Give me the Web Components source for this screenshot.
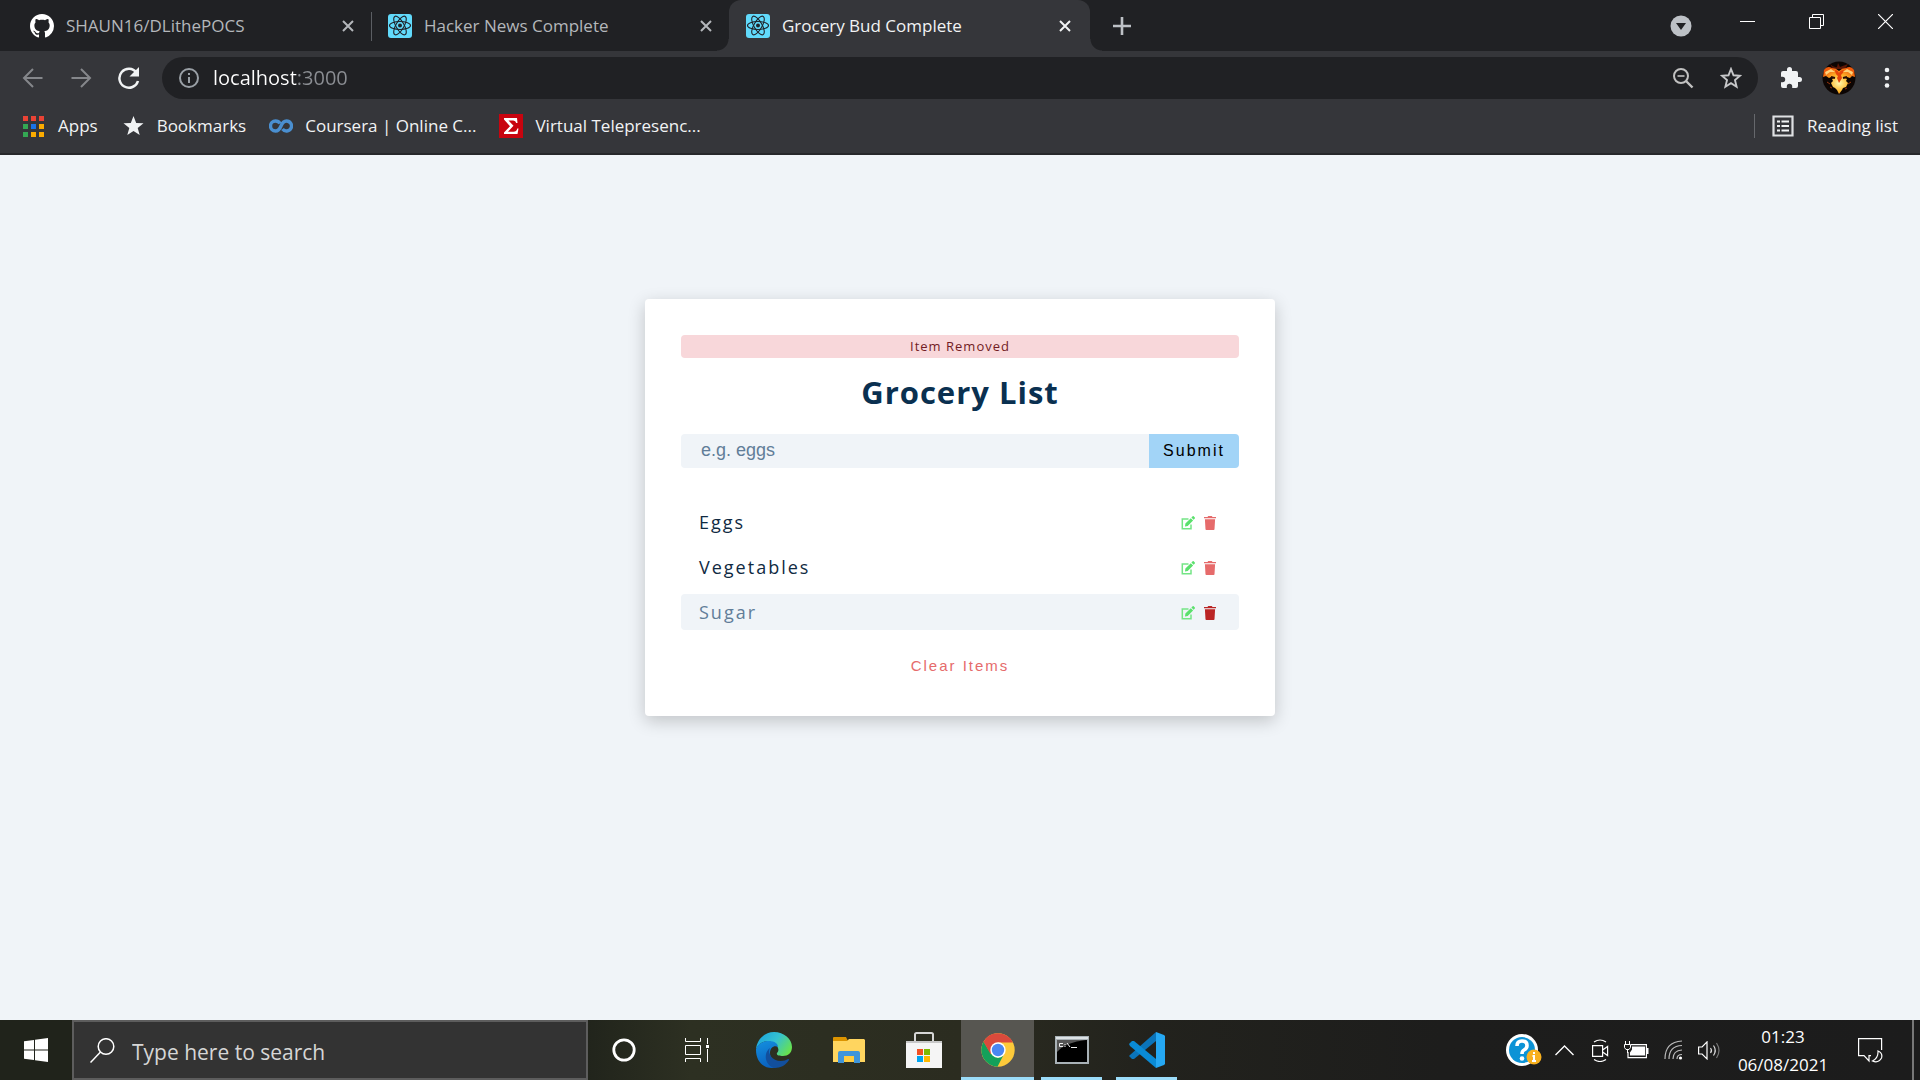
<!DOCTYPE html>
<html lang="en">
<head>
<meta charset="utf-8">
<title>Grocery Bud Complete</title>
<style>
  html { height: 100%; }
  body {
    margin: 0; min-height: 100%; display: flex; flex-direction: column;
    background: #f0f4f8; font-family: "Open Sans", "Noto Sans", sans-serif; font-size: 17px;
  }
  main { flex: 1; padding: 144px 0 0; }
</style>
</head>
<body>
<tab-strip>
  <browser-tab icon="github">SHAUN16/DLithePOCS</browser-tab>
  <browser-tab icon="react" divided>Hacker News Complete</browser-tab>
  <browser-tab icon="react" active>Grocery Bud Complete</browser-tab>
</tab-strip>
<address-bar></address-bar>
<bookmark-bar>
  <bookmark-link icon="apps">Apps</bookmark-link>
  <bookmark-link icon="star">Bookmarks</bookmark-link>
  <bookmark-link icon="coursera">Coursera | Online C...</bookmark-link>
  <bookmark-link icon="sigma">Virtual Telepresenc...</bookmark-link>
  <bookmark-link icon="reading" slot="end">Reading list</bookmark-link>
</bookmark-bar>
<main>
  <grocery-card>
    <span slot="alert">Item Removed</span>
    <span slot="title">Grocery List</span>
    <grocery-item>Eggs</grocery-item>
    <grocery-item>Vegetables</grocery-item>
    <grocery-item current>Sugar</grocery-item>
  </grocery-card>
</main>
<task-bar>
  <task-button icon="cortana" label="Cortana"></task-button>
  <task-button icon="taskview" label="Task View"></task-button>
  <task-button icon="edge" label="Microsoft Edge"></task-button>
  <task-button icon="folder" label="File Explorer"></task-button>
  <task-button icon="store" label="Microsoft Store"></task-button>
  <task-button icon="chrome" label="Google Chrome" active></task-button>
  <task-button icon="cmd" label="Command Prompt" running></task-button>
  <task-button icon="vscode" label="Visual Studio Code" running></task-button>
</task-bar>

<script>
const ICONS = {
  github: [24, 24, '<path transform="scale(1.5)" fill="#fff" d="M8 0C3.58 0 0 3.58 0 8c0 3.54 2.29 6.53 5.47 7.59.4.07.55-.17.55-.38 0-.19-.01-.82-.01-1.49-2.01.37-2.53-.49-2.69-.94-.09-.23-.48-.94-.82-1.13-.28-.15-.68-.52-.01-.53.63-.01 1.08.58 1.23.82.72 1.21 1.87.87 2.33.66.07-.52.28-.87.51-1.07-1.78-.2-3.64-.89-3.64-3.95 0-.87.31-1.59.82-2.15-.08-.2-.36-1.02.08-2.12 0 0 .67-.21 2.2.82.64-.18 1.32-.27 2-.27s1.36.09 2 .27c1.53-1.04 2.2-.82 2.2-.82.44 1.1.16 1.92.08 2.12.51.56.82 1.27.82 2.15 0 3.07-1.87 3.75-3.65 3.95.29.25.54.73.54 1.48 0 1.07-.01 1.93-.01 2.2 0 .21.15.46.55.38A8.01 8.01 0 0 0 16 8c0-4.42-3.58-8-8-8z"/>'],
  react: [24, 24, '<rect width="24" height="24" rx="3" fill="#61dafb"/><g fill="none" stroke="#20232a" stroke-width="1.1"><ellipse cx="12" cy="11.500" rx="10.500" ry="4"/><ellipse cx="12" cy="11.500" rx="10.500" ry="4" transform="rotate(60 12 11.500)"/><ellipse cx="12" cy="11.500" rx="10.500" ry="4" transform="rotate(120 12 11.500)"/></g><circle cx="12" cy="11.500" r="2" fill="#20232a"/>'],
  close: [14, 14, '<path d="M2 2l10 10M12 2L2 12" stroke="currentColor" stroke-width="2"/>'],
  plus: [18, 18, '<path d="M9 0v18M0 9h18" stroke="#bdc1c6" stroke-width="2.600"/>'],
  dropdown: [22, 22, '<circle cx="11" cy="11" r="10.500" fill="#bdc1c6"/><path d="M6 8h10l-5 7z" fill="#202124"/>'],
  minimize: [15, 15, '<path d="M0 7.500h15" stroke="#fff"/>'],
  restore: [15, 15, '<path d="M.5 3.500h11v11H.5zM3.500 3.500v-3h11v11h-3" fill="none" stroke="#fff"/>'],
  quit: [15, 15, '<path d="M0 0l15 15M15 0L0 15" stroke="#fff" stroke-width="1.200"/>'],
  back: [22, 22, '<path d="M20.500 11H2.500M11 2L2 11l9 9" fill="none" stroke="#85878b" stroke-width="2"/>'],
  forward: [22, 22, '<path d="M1.500 11h18M11 2l9 9-9 9" fill="none" stroke="#85878b" stroke-width="2"/>'],
  reload: [24, 24, '<path d="M19.500 6.500A9.500 9.500 0 1 0 21 15" fill="none" stroke="#f1f3f4" stroke-width="2.500"/><path d="M22 1v9.500h-9.500z" fill="#f1f3f4"/>'],
  info: [20, 20, '<circle cx="10" cy="10" r="9" fill="none" stroke="#9aa0a6" stroke-width="2"/><path d="M10 5v2M10 9v6" stroke="#9aa0a6" stroke-width="2"/>'],
  zoomout: [22, 22, '<circle cx="9" cy="9" r="7" fill="none" stroke="#c1c1c1" stroke-width="2"/><path d="M14 14l6.500 6.500" stroke="#c1c1c1" stroke-width="2.400"/><path d="M5.500 9h7" stroke="#c1c1c1" stroke-width="1.600"/>'],
  staroutline: [22, 22, '<path d="M11 2l2.500 6.300 6.500.5-5 4.300 1.600 6.600L11 16.200l-5.600 3.500L7 13.100 2 8.800l6.500-.5z" fill="none" stroke="#c7c8ca" stroke-width="1.900"/>'],
  puzzle: [24, 24, '<path fill="#f1f3f4" d="M20.500 11H19V7a2 2 0 0 0-2-2h-4V3.500a2.500 2.500 0 0 0-5 0V5H4a2 2 0 0 0-1.990 2v3.800H3.500a2.700 2.700 0 0 1 0 5.400H2V20a2 2 0 0 0 2 2h3.800v-1.500a2.700 2.700 0 0 1 5.400 0V22H17a2 2 0 0 0 2-2v-4h1.500a2.500 2.500 0 0 0 0-5z"/>'],
  avatar: [34, 34, '<defs><radialGradient id="f" cx=".5" cy=".6" r=".6"><stop offset="0" stop-color="#fff9b0"/><stop offset=".5" stop-color="#ffb62a"/><stop offset="1" stop-color="#ee5a0a"/></radialGradient></defs><circle cx="17" cy="17" r="16.500" fill="#0c0503"/><path d="M8 3q4 4 7 3l1-4 2 4 8-3-3 5H11z" fill="#5a1706"/><path d="M2 9Q5 4 10 7q4 0 7 3 3-3 7-3 5-3 8 2l1 7-3-1-2 2-3-1-2 1 2 1-1 2 2 2-2 4-3 1-1 2-3 4-2-4-2-2-2-1-2-4 2-2-1-2 2-1-3-1-2 1-3-2-3 1z" fill="url(#f)"/><path d="M13 9q3 0 4 3 1-3 5-3-1 4-3 5l1 3-3 5-2-5 1-2q-3-2-3-6z" fill="#e5450a"/><path d="M3 11l6-3 4 3-5 0-4 3M31 11l-6-3-4 3 5 0 4 3" fill="#ffd27a"/><path d="M9 16l4 1M25 16l-4 1" stroke="#2a0b03" stroke-width="2"/><path d="M5 21l3 2M29 21l-3 2M8 26l2 1M25 27l-2 1" stroke="#9b350b"/>'],
  dots: [6, 22, '<g fill="#f1f3f4"><circle cx="3" cy="3" r="2.300"/><circle cx="3" cy="11" r="2.300"/><circle cx="3" cy="18.500" r="2.300"/></g>'],
  apps: [24, 24, '<g transform="translate(1 2)"><path fill="#ea4335" d="M0 0h5v5H0zM8 0h5v5H8zM16 0h5v5h-5z"/><path fill="#34a853" d="M0 8h5v5H0zM0 16h5v5H0z"/><path fill="#1a73e8" d="M8 8h5v5H8z"/><path fill="#fbab00" d="M16 8h5v5h-5zM8 16h5v5H8zM16 16h5v5h-5z"/></g>'],
  star: [24, 24, '<path transform="translate(2 1)" d="M10.500 1l2.700 7 7.300.3-5.800 4.600 2 7.100-6.200-4.100L4.300 20l2-7.100L.5 8.300l7.300-.3z" fill="#f1f3f4"/>'],
  coursera: [24, 14, '<path d="M11 4.500Q9.500 2 6.500 2A5 5 0 0 0 6.500 12Q10 12 12 7T17.500 2A5 5 0 1 1 13.500 10" fill="none" stroke="#4a8fd0" stroke-width="3.400"/>'],
  sigma: [24, 24, '<path fill="#c8040f" d="M0 0h24v24H0z"/><path fill="#fff" d="M5 4h13l.5 5h-1.300q-.5-2.500-3-2.500H9.500l5 5.200-5.500 6h5.500q3 0 3.800-3.200h1.200L18.500 20H5v-1.500l6-6.300-6-6.700z"/>'],
  reading: [24, 24, '<g transform="translate(1 1)"><path d="M1.500 1.500h19v19h-19z" fill="none" stroke="#dfe1e3" stroke-width="2.200"/><path d="M5 6.500h3m1.500 0H17M5 11h3m1.500 0H17M5 15.500h3m1.500 0H17" stroke="#f1f3f4" stroke-width="2.200"/></g>'],
  edit: [14, 14, '<path d="M7.500 3H1.300v9.700H10V8.500" fill="none" stroke="#74e585" stroke-width="1.500"/><path fill="#5ae06c" d="M4 10.500l.4-2.900L9.800 2.200l2.300 2.300-5.400 5.500zM10.400 1.600L11.700.3q.5-.4 1 0l1.100 1.100q.5.500 0 1l-1.200 1.300z"/>'],
  trash: [12, 14, '<path fill="currentColor" d="M0 1h3.500l.7-1h3.600l.7 1H12v1.300H0zM.9 3.200h10.200l-.6 10q-.1.800-.8.800H2.300q-.7 0-.8-.8z"/>'],
  windows: [24, 24, '<path fill="#fff" d="M0 3.300L10 2v9.500H0zM11 1.800L24 0v11.500H11zM0 12.500h10V22L0 20.700zM11 12.500h13V24l-13-1.800z"/>'],
  search: [25, 25, '<circle cx="16" cy="8.500" r="7.800" fill="none" stroke="#fff" stroke-width="1.500"/><path d="M10.500 14L.5 24.500" stroke="#fff" stroke-width="1.500"/>'],
  cortana: [24, 24, '<circle cx="12" cy="12" r="10.200" fill="none" stroke="#fff" stroke-width="2.800"/>'],
  taskview: [28, 24, '<path fill="none" stroke="#fff" d="M.5 7.500h15v9H.5zM.5 0v3.500h15V0M.5 24v-3.500h15V24M22.500 0v6M22.500 11v13"/><path fill="#fff" d="M21 7h3v3h-3z"/>'],
  edge: [36, 36, '<defs><linearGradient id="a" x1="0" x2="1" y1=".2" y2=".7"><stop stop-color="#1ba5de"/><stop offset=".5" stop-color="#35c1d1"/><stop offset="1" stop-color="#69e34b"/></linearGradient><linearGradient id="b" x2=".3" y2="1"><stop stop-color="#1490df"/><stop offset="1" stop-color="#0a62c0"/></linearGradient></defs><path fill="url(#a)" d="M0 17C1 7 9 0 18 0c10 0 18 7 18 15 0 6-4 9-9 9-4 0-7-1-6-3 2-2 2-5-1-8C15 7 4 8 0 17z"/><path fill="url(#b)" d="M0 17c2-6 8-8 13-8 6 0 9 3 9 6-4-2-8 1-8 6 0 6 5 11 11 12-3 2-6 3-9 3C7 36 0 29 0 18z"/><path fill="#124f9d" d="M14 16c-3 5 2 13 11 13 3 0 5-1 7-2q2 0 1 1c-3 5-8 8-15 8-9-3-11-15-4-20z"/>'],
  folder: [32, 27, '<path fill="#dc9400" d="M0 1q0-1 1-1h12l2 4H0z"/><path fill="#ffd55f" d="M0 4h14l2-2h15l1 1v22H0z"/><path fill="#3f95da" d="M5 26V16q0-2 2-2h18q2 0 2 2v10h-6v-7H11v7z"/><path fill="#ffcc40" d="M11 19h10v6H11z"/>'],
  store: [36, 36, '<path d="M9 12V2.500Q9 1 10.500 1h15Q27 1 27 2.500V12" fill="none" stroke="#d6d6d6" stroke-width="2"/><path fill="#f5f5f5" d="M0 9h36v27H0z"/><path fill="#c8c8c8" d="M0 9h36v2H0z"/><path fill="#f25022" d="M11 17h6v6h-6z"/><path fill="#7fba00" d="M18 17h6v6h-6z"/><path fill="#00a4ef" d="M11 24h6v6h-6z"/><path fill="#ffb900" d="M18 24h6v6h-6z"/>'],
  chrome: [34, 34, '<circle cx="17" cy="17" r="16.700" fill="#fdca3a"/><path fill="#14a05a" d="M2.600 8.500L10 21l7 4 6-4-6.500 12.700A16.700 16.700 0 0 1 2.600 8.500z"/><path fill="#db4a3c" d="M9.500 21L2.500 8.700A16.700 16.700 0 0 1 31.900 9.500H17z"/><circle cx="17" cy="17" r="7.700" fill="#fff"/><circle cx="17" cy="17" r="6.200" fill="#4a87f2"/>'],
  cmd: [34, 28, '<path fill="#a9b2b7" d="M0 0h34v28H0z"/><path fill="#dde3e6" d="M1 1h32v2H1z"/><path fill="#000" d="M2 4h30v22H2z"/><path fill="#555" d="M2 4h29q-20 2-29 12z"/><path d="M8 7.500H4.500v3H8M10 8v1M10 10v1M12 7l3 4M16 11.500h6" stroke="#eee" fill="none"/>'],
  vscode: [36, 36, '<path fill="#0b74ba" d="M0 24l3 3 2 0L27 9V0L1 23z"/><path fill="#0a8bd6" d="M0 12l3-3h2l22 18v9L1 14z"/><path fill="#25a8f3" d="M27 0l8 3 1 1v28l-1 1-8 3z"/>'],
  help: [36, 33, '<circle cx="16" cy="16" r="16" fill="#fff"/><circle cx="16" cy="16" r="13" fill="#0c93d6"/><path d="M11 12q0-5 5-5t5 4.500q0 3-3 4.500-2 1-2 4" fill="none" stroke="#fff" stroke-width="3.600"/><circle cx="16" cy="24.500" r="2.300" fill="#fff"/><circle cx="28" cy="23" r="7.500" fill="#f8b01e"/><path d="M28 18v2M26.500 22H28v5M26 27h4" stroke="#fff" stroke-width="2" fill="none"/>'],
  chevron: [19, 12, '<path d="M.5 11l9-9 9 9" fill="none" stroke="#fff" stroke-width="1.400"/>'],
  camera: [17, 23, '<path d="M.6 6.600h10v10.800H.6zM10.600 11l5-3.500v9l-5-3.500M2 3q6-4 12 0M2 20.500q6 4 12 0" fill="none" stroke="#fff" stroke-width="1.200"/>'],
  battery: [25, 18, '<path d="M7 3.600h15.400v13H4V11" fill="none" stroke="#fff" stroke-width="1.200"/><path fill="#fff" d="M8 5.500h13v9H6v-3l2-3zM23 7h1.500v6H23z"/><path d="M1.500 0v3M5.500 0v3M.5 3.500h6v3l-1.500 2H2l-1.500-2zM3.500 8.500V12" fill="none" stroke="#fff"/>'],
  wifi: [19, 20, '<path d="M1 19Q1 2 18 1M5 19Q5 6 18 5.500M9 19q0-8.500 9-9M13 19q0-4.500 5-4.500" fill="none" stroke="#bbb" stroke-width="1.200"/><circle cx="16.500" cy="18" r="1.600" fill="#fff"/>'],
  volume: [23, 19, '<path d="M.6 6h3.500L9 .9v17L4.100 13H.6z" fill="none" stroke="#fff" stroke-width="1.200"/><path d="M12.500 7q2 2.500 0 5M15.500 4.500q3.500 5 0 10" fill="none" stroke="#ddd" stroke-width="1.200"/><path d="M18.500 2q5 7.500 0 15" fill="none" stroke="#777" stroke-width="1.200"/>'],
  notify: [25, 25, '<path d="M13 17.600h-2V23l-5-5.400H.6V.6h23V12" fill="none" stroke="#fff" stroke-width="1.200"/><path d="M20 13q5 2 3.500 7-3 5.500-9 3 6-3 5.500-10z" fill="none" stroke="#fff" stroke-width="1.200"/>'],
};

/* Registers a custom element whose shadow root is cloned from a template. */
function define(name, html, setup) {
  const tpl = document.createElement('template');
  tpl.innerHTML = html;
  customElements.define(name, class extends HTMLElement {
    constructor() {
      super();
      this.attachShadow({ mode: 'open' }).append(tpl.content.cloneNode(true));
    }
    connectedCallback() { if (setup) setup(this, this.shadowRoot); }
  });
}

/* Draws the icon named by its "name" attribute, and redraws when the name changes. */
customElements.define('ui-icon', class extends HTMLElement {
  static observedAttributes = ['name'];
  constructor() {
    super();
    this.attachShadow({ mode: 'open' });
  }
  attributeChangedCallback(attr, old, name) {
    const [w, h, body] = ICONS[name];
    this.shadowRoot.innerHTML = `<style>:host{display:block;flex:none}svg{display:block}</style><svg width="${w}" height="${h}" viewBox="0 0 ${w} ${h}" aria-hidden="true">${body}</svg>`;
  }
});

const BUTTON = 'button{display:flex;align-items:center;justify-content:center;flex:none;margin:0;padding:0;border:0;background:none;color:inherit;font:inherit;cursor:pointer}';

define('browser-tab', `<style>${BUTTON}
  :host{display:flex;align-items:center;gap:12px;position:relative;box-sizing:border-box;flex:0 1 358px;height:51px;padding:0 11px 0 17px;color:#b4b7bb}
  :host([active]){flex-basis:361px;padding-right:13px;background:#35363a;color:#f1f3f4;border-radius:12px 12px 0 0}
  :host([divided])::before{content:"";position:absolute;left:0;top:12px;width:1px;height:29px;background:#5b5e63}
  :host([active])::before,:host([active])::after{content:"";position:absolute;bottom:0;width:12px;height:12px}
  :host([active])::before{left:-12px;background:radial-gradient(circle at 0 0,#202124 11px,#35363a 12px)}
  :host([active])::after{right:-12px;background:radial-gradient(circle at 100% 0,#202124 11px,#35363a 12px)}
  .name{flex:1;white-space:nowrap;overflow:hidden}
  button{width:24px;height:24px}
  </style><ui-icon></ui-icon><span class="name"><slot></slot></span><button aria-label="Close tab"><ui-icon name="close"></ui-icon></button>`,
  (el, root) => root.querySelector('ui-icon').setAttribute('name', el.getAttribute('icon')));

define('tab-strip', `<style>${BUTTON}
  :host{display:flex;align-items:center;height:51px;padding-left:13px;background:#202124}
  .new{width:30px;height:30px;margin-left:17px}
  .search{margin-left:auto;margin-right:21px}
  .window{display:flex;align-self:flex-start}
  .window button{width:69px;height:43px}
  </style><slot></slot><button class="new" aria-label="New tab"><ui-icon name="plus"></ui-icon></button>
  <button class="search" aria-label="Search tabs"><ui-icon name="dropdown"></ui-icon></button>
  <div class="window"><button aria-label="Minimise"><ui-icon name="minimize"></ui-icon></button><button aria-label="Restore"><ui-icon name="restore"></ui-icon></button><button aria-label="Close"><ui-icon name="quit"></ui-icon></button></div>`);

define('address-bar', `<style>${BUTTON}
  :host{display:flex;align-items:center;box-sizing:border-box;height:52px;padding:2px 9px 0;background:#35363a;color:#fff}
  button{width:48px;height:42px}
  .omnibox{display:flex;align-items:center;flex:1;height:42px;margin:0 9px;padding:0 3px 0 17px;border-radius:21px;background:#202124}
  input{flex:1;min-width:0;margin-left:14px;padding:0;border:0;outline:0;font:20px/30px "Open Sans","Noto Sans",sans-serif;color:transparent;background:linear-gradient(90deg,#fff 85px,#8b8e93 85px);-webkit-background-clip:text;background-clip:text}
  </style><button aria-label="Back"><ui-icon name="back"></ui-icon></button><button aria-label="Forward"><ui-icon name="forward"></ui-icon></button><button aria-label="Reload"><ui-icon name="reload"></ui-icon></button>
  <div class="omnibox"><ui-icon name="info"></ui-icon><input type="text" aria-label="Address" value="localhost:3000"><button aria-label="Zoom"><ui-icon name="zoomout"></ui-icon></button><button aria-label="Bookmark this page"><ui-icon name="staroutline"></ui-icon></button></div>
  <button aria-label="Extensions"><ui-icon name="puzzle"></ui-icon></button><button aria-label="Profile"><ui-icon name="avatar"></ui-icon></button><button aria-label="Menu"><ui-icon name="dots"></ui-icon></button>`);

define('bookmark-link', `<style>
  :host{display:block}
  a{display:flex;align-items:center;gap:12px;color:#f1f3f4;text-decoration:none;white-space:nowrap;line-height:24px}
  </style><a href="#"><ui-icon></ui-icon><slot></slot></a>`,
  (el, root) => root.querySelector('ui-icon').setAttribute('name', el.getAttribute('icon')));

define('bookmark-bar', `<style>
  :host{display:flex;align-items:center;gap:23px;height:46px;padding:0 22px 4px;background:#35363a;border-bottom:2px solid #27282b}
  .end{display:flex;margin-left:auto;padding-left:16px;border-left:1px solid #66686c}
  </style><slot></slot><div class="end"><slot name="end"></slot></div>`);

define('grocery-item', `<style>${BUTTON}
  :host{display:flex;align-items:center;justify-content:space-between;height:36px;padding:0 23px 0 18px;border-radius:4px;color:#102a42;font-size:18px;letter-spacing:2px}
  :host([current]){background:#f0f4f8;color:#617d98}
  div{display:flex;gap:9px;padding-top:1px}
  .delete{color:#e66b6b}
  :host([current]) .delete{color:#bb2525}
  </style><span><slot></slot></span><div><button aria-label="Edit"><ui-icon name="edit"></ui-icon></button><button class="delete" aria-label="Delete"><ui-icon name="trash"></ui-icon></button></div>`);

define('grocery-card', `<style>${BUTTON}
  :host{display:block;box-sizing:border-box;width:90%;max-width:630px;margin:0 auto;padding:36px;border-radius:4px;background:#fff;box-shadow:0 5px 17px rgba(0,0,0,.2)}
  .alert{margin:0;border-radius:4px;background:#f8d7da;color:#721c24;font-size:13px;line-height:23px;letter-spacing:1px;text-align:center}
  h3{margin:13px 0 21px;color:#0a3050;font-size:31px;line-height:42px;letter-spacing:1px;text-align:center}
  form{display:flex;height:34px}
  input{flex:1;min-width:0;margin:0;padding:0 0 2px 20px;border:0;border-radius:4px 0 0 4px;background:#f0f4f8;color:#617d98;font:18px "Liberation Sans",sans-serif}
  input::placeholder{color:#617d98;opacity:1}
  form button{width:90px;border-radius:0 4px 4px 0;background:#a2d4f7;color:#000;font:16px "Liberation Sans",sans-serif;letter-spacing:2px}
  .list{display:flex;flex-direction:column;gap:9px;margin-top:36px}
  .clear{margin:24px auto 2px;color:#e66b6b;font:15px/24px "Liberation Sans",sans-serif;letter-spacing:2px}
  </style><p class="alert"><slot name="alert"></slot></p><h3><slot name="title"></slot></h3>
  <form><input type="text" aria-label="Grocery item" placeholder="e.g. eggs"><button type="button">Submit</button></form>
  <div class="list"><slot></slot></div><button class="clear">Clear Items</button>`);

define('task-button', `<style>${BUTTON}
  :host{display:block;position:relative;width:75px}
  button{width:100%;height:60px}
  :host([active]){background:#575651;width:73px}
  :host([active])::after,:host([running])::after{content:"";position:absolute;left:0;right:0;bottom:0;height:3px;background:#9bdcf9}
  :host([running])::after{left:7px;right:7px}
  </style><button><ui-icon></ui-icon></button>`,
  (el, root) => {
    root.querySelector('ui-icon').setAttribute('name', el.getAttribute('icon'));
    root.querySelector('button').setAttribute('aria-label', el.getAttribute('label'));
  });

define('task-bar', `<style>${BUTTON}
  :host{display:flex;align-items:center;height:60px;color:#fff;background:linear-gradient(90deg,#20231b,#20231b 30%,#2d3022 36%,#2b2c20 50%,#22221d 60%,#1d1d1c 75%,#1c1c1c)}
  .start{width:72px;height:60px}
  label{display:flex;align-items:center;gap:17px;box-sizing:border-box;flex:0 1 516px;height:60px;padding:0 16px;border:2px solid #5d5d5d;background:#333}
  input{flex:1;min-width:0;padding:3px 0 0;border:0;outline:0;background:none;font:21px/30px "Open Sans","Noto Sans",sans-serif}
  input::placeholder{color:#d6d6d6;opacity:1}
  .apps{display:flex;margin-left:-2px}
  .tray{display:flex;align-items:center;gap:15px;height:60px;margin-left:auto;padding-right:6px}
  .help{margin-right:-2px}
  .more{margin-right:3px}
  .clock{flex-direction:column;width:94px;margin-right:13px;padding-top:2px;font-size:17px;line-height:28px}
  .desktop{align-self:stretch;width:2px;margin-left:14px;background:#777}
  </style><button class="start" aria-label="Start"><ui-icon name="windows"></ui-icon></button>
  <label><ui-icon name="search"></ui-icon><input type="text" aria-label="Search" placeholder="Type here to search"></label>
  <div class="apps"><slot></slot></div>
  <div class="tray"><button class="help" aria-label="Help"><ui-icon name="help"></ui-icon></button><button class="more" aria-label="Hidden icons"><ui-icon name="chevron"></ui-icon></button><button aria-label="Meet now"><ui-icon name="camera"></ui-icon></button><button aria-label="Battery"><ui-icon name="battery"></ui-icon></button><button aria-label="Network"><ui-icon name="wifi"></ui-icon></button><button aria-label="Volume"><ui-icon name="volume"></ui-icon></button>
  <button class="clock"><span>01:23</span><span>06/08/2021</span></button><button aria-label="Notifications"><ui-icon name="notify"></ui-icon></button><div class="desktop"></div></div>`);
</script>
</body>
</html>
